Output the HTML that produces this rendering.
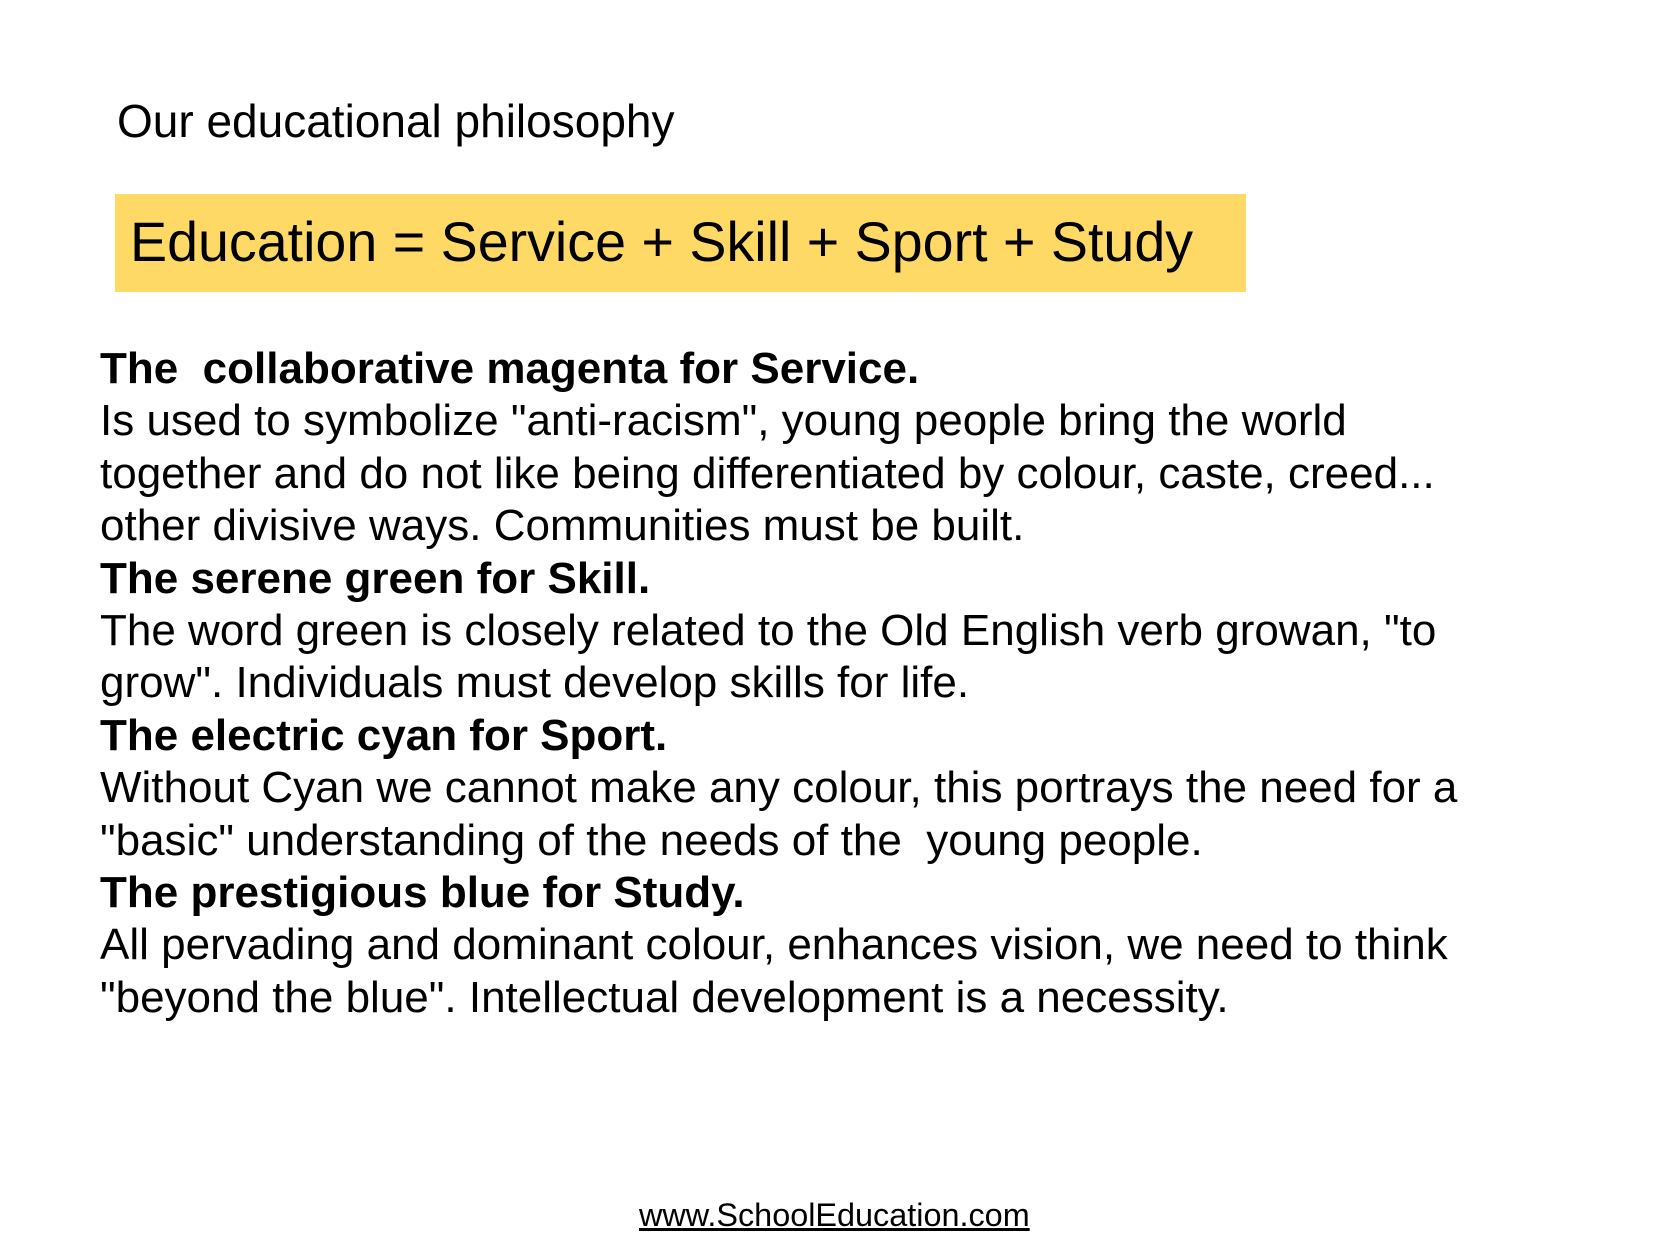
<!DOCTYPE html>
<html><head><style>
body{margin:0;width:1668px;height:1248px;background:#fff;font-family:"Liberation Sans",Arial,sans-serif;color:#000;position:relative;overflow:hidden}
.t{position:absolute;left:117px;top:94px;font-size:46px;white-space:nowrap}
.box{position:absolute;left:115px;top:194px;width:1131px;height:98px;background:#ffd966}
.box span{position:absolute;left:15px;top:16px;font-size:55.6px;white-space:nowrap}
.body{position:absolute;left:100px;top:343px;font-size:44px;line-height:52.4px;white-space:nowrap}
.body b{font-weight:bold}
.f{position:absolute;left:639px;top:1197px;font-size:32.4px;text-decoration:underline;white-space:nowrap}
</style></head><body>
<div class="t">Our educational philosophy</div>
<div class="box"><span>Education = Service + Skill + Sport + Study</span></div>
<div class="body">
<b>The &nbsp;collaborative magenta for Service.</b><br>
Is used to symbolize "anti-racism", young people bring the world<br>
together and do not like being differentiated by colour, caste, creed...<br>
other divisive ways. Communities must be built.<br>
<b>The serene green for Skill.</b><br>
The word green is closely related to the Old English verb growan, "to<br>
grow". Individuals must develop skills for life.<br>
<b>The electric cyan for Sport.</b><br>
Without Cyan we cannot make any colour, this portrays the need for a<br>
"basic" understanding of the needs of the &nbsp;young people.<br>
<b>The prestigious blue for Study.</b><br>
All pervading and dominant colour, enhances vision, we need to think<br>
"beyond the blue". Intellectual development is a necessity.
</div>
<div class="f">www.SchoolEducation.com</div>
</body></html>
